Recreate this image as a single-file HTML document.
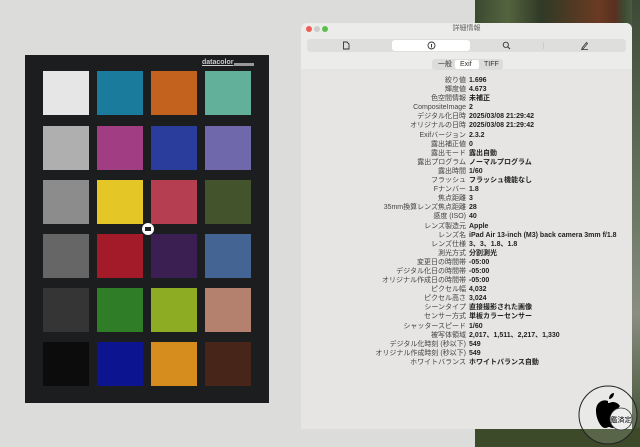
<!DOCTYPE html>
<html><head><meta charset="utf-8"><style>
*{margin:0;padding:0;box-sizing:border-box}
body{width:640px;height:447px;overflow:hidden;position:relative;background:#dcdcda;font-family:"Liberation Sans","Noto Sans CJK JP",sans-serif}
.forest{position:absolute;left:475px;top:0;width:165px;height:447px;background:linear-gradient(90deg,#3a4a30 0%,#55643f 20%,#2f3a26 40%,#6b3a22 75%,#5a3020 85%,#3d4a33 90%,#566b4a 100%)}
.forest2{position:absolute;left:632px;top:0;width:8px;height:447px;background:linear-gradient(#3c4a36,#6e7a68 50%,#8a8e82 70%,#3a4a2c)}
.forest3{position:absolute;left:475px;top:428px;width:165px;height:19px;background:#3c4a2a}
.chart{position:absolute;left:25px;top:55px;width:244px;height:348px;background:#1c1d1f}
.sw{position:absolute;width:46px;height:44px}
.win{position:absolute;left:301px;top:23px;width:331px;height:406px;background:#e6e5e4;border-radius:6px 6px 0 0;overflow:hidden}
.head{position:absolute;left:0;top:0;width:331px;height:46px;background:#ececeb}
.title{position:absolute;top:1px;width:331px;text-align:center;font-size:7px;line-height:9px;color:#666}
.dot{position:absolute;top:3px;width:6px;height:6px;border-radius:50%}
.tb{position:absolute;left:6px;top:16px;width:319px;height:13px;background:#dededd;border-radius:3px}
.tsel{position:absolute;left:85px;top:1px;width:78px;height:11px;background:#fff;border-radius:3px}
.seg{position:absolute;left:131px;top:36px;width:71px;height:11px;background:#dcdcdb;border-radius:3px;font-size:7px;line-height:11px;color:#333}
.seg span{position:absolute;top:0}
.rows{position:absolute;left:0;top:53px;width:331px;font-size:7px;line-height:9.1px}
.r{height:9.1px;line-height:9.1px;white-space:nowrap;overflow:visible}
.l{display:inline-block;width:165px;text-align:right;color:#444}
.v{display:inline-block;margin-left:3px;font-weight:bold;color:#222}
</style></head><body>
<div class="forest"></div><div class="forest2"></div><div class="forest3"></div>
<div class="chart">
<div style="position:absolute;left:177px;top:4px;font-size:7px;color:#ccc;font-weight:bold;text-decoration:underline">datacolor</div>
<div style="position:absolute;left:209px;top:8px;width:20px;height:3px;background:#999"></div>
<div class="sw" style="left:18px;top:16px;background:#e6e6e6"></div>
<div class="sw" style="left:72px;top:16px;background:#1a7b9d"></div>
<div class="sw" style="left:126px;top:16px;background:#c3621f"></div>
<div class="sw" style="left:180px;top:16px;background:#62b09a"></div>
<div class="sw" style="left:18px;top:71px;background:#afafaf"></div>
<div class="sw" style="left:72px;top:71px;background:#a03d83"></div>
<div class="sw" style="left:126px;top:71px;background:#2a3c9c"></div>
<div class="sw" style="left:180px;top:71px;background:#6f68ab"></div>
<div class="sw" style="left:18px;top:125px;background:#8c8c8c"></div>
<div class="sw" style="left:72px;top:125px;background:#e4c626"></div>
<div class="sw" style="left:126px;top:125px;background:#b53f50"></div>
<div class="sw" style="left:180px;top:125px;background:#43532c"></div>
<div class="sw" style="left:18px;top:179px;background:#666"></div>
<div class="sw" style="left:72px;top:179px;background:#a31a28"></div>
<div class="sw" style="left:126px;top:179px;background:#3b1f53"></div>
<div class="sw" style="left:180px;top:179px;background:#446494"></div>
<div class="sw" style="left:18px;top:233px;background:#353535"></div>
<div class="sw" style="left:72px;top:233px;background:#2f7d27"></div>
<div class="sw" style="left:126px;top:233px;background:#8dac24"></div>
<div class="sw" style="left:180px;top:233px;background:#b5816f"></div>
<div class="sw" style="left:18px;top:287px;background:#0c0c0c"></div>
<div class="sw" style="left:72px;top:287px;background:#0c1490"></div>
<div class="sw" style="left:126px;top:287px;background:#d68d1e"></div>
<div class="sw" style="left:180px;top:287px;background:#472518"></div>
<div style="position:absolute;left:117px;top:168px;width:12px;height:12px;border-radius:50%;background:#fff"><div style="position:absolute;left:3px;top:4px;width:6px;height:4px;background:#222"></div></div>
</div>
<div class="win">
<div class="head">
<div class="dot" style="left:5px;background:#ee5d55"></div>
<div class="dot" style="left:13px;background:#ccc"></div>
<div class="dot" style="left:21px;background:#5bc04a"></div>
<div class="title">詳細情報</div>
<div class="tb"><div class="tsel"></div>
<svg style="position:absolute;left:35px;top:2px" width="8" height="9"><path d="M1.5 1h3.5l2 2v5h-5.5z" fill="none" stroke="#333" stroke-width="0.9"/></svg>
<svg style="position:absolute;left:120px;top:2px" width="9" height="9"><circle cx="4.5" cy="4.5" r="3.5" fill="none" stroke="#333" stroke-width="0.9"/><path d="M4.5 3v3.5" stroke="#333"/></svg>
<svg style="position:absolute;left:195px;top:2px" width="9" height="9"><circle cx="3.8" cy="3.8" r="2.6" fill="none" stroke="#333" stroke-width="0.9"/><path d="M5.7 5.7l2.3 2.3" stroke="#333"/></svg>
<div style="position:absolute;left:236px;top:3px;width:1px;height:7px;background:#ccc"></div>
<svg style="position:absolute;left:273px;top:2px" width="9" height="9"><path d="M2 7l4.5-5.5 1 1L3 8H2zM1 8.5h7" fill="none" stroke="#333" stroke-width="0.8"/></svg>
</div>
<div class="seg"><div style="position:absolute;left:23px;top:1px;width:24px;height:9px;background:#fff;border-radius:2px"></div><span style="left:6px">一般</span><span style="left:28px">Exif</span><span style="left:52px">TIFF</span></div>
</div>
<div class="rows">
<div class="r"><span class="l">絞り値</span><span class="v">1.696</span></div>
<div class="r"><span class="l">輝度値</span><span class="v">4.673</span></div>
<div class="r"><span class="l">色空間情報</span><span class="v">未補正</span></div>
<div class="r"><span class="l">CompositeImage</span><span class="v">2</span></div>
<div class="r"><span class="l">デジタル化日時</span><span class="v">2025/03/08 21:29:42</span></div>
<div class="r"><span class="l">オリジナルの日時</span><span class="v">2025/03/08 21:29:42</span></div>
<div class="r"><span class="l">Exifバージョン</span><span class="v">2.3.2</span></div>
<div class="r"><span class="l">露出補正値</span><span class="v">0</span></div>
<div class="r"><span class="l">露出モード</span><span class="v">露出自動</span></div>
<div class="r"><span class="l">露出プログラム</span><span class="v">ノーマルプログラム</span></div>
<div class="r"><span class="l">露出時間</span><span class="v">1/60</span></div>
<div class="r"><span class="l">フラッシュ</span><span class="v">フラッシュ機能なし</span></div>
<div class="r"><span class="l">Fナンバー</span><span class="v">1.8</span></div>
<div class="r"><span class="l">焦点距離</span><span class="v">3</span></div>
<div class="r"><span class="l">35mm換算レンズ焦点距離</span><span class="v">28</span></div>
<div class="r"><span class="l">感度 (ISO)</span><span class="v">40</span></div>
<div class="r"><span class="l">レンズ製造元</span><span class="v">Apple</span></div>
<div class="r"><span class="l">レンズ名</span><span class="v">iPad Air 13-inch (M3) back camera 3mm f/1.8</span></div>
<div class="r"><span class="l">レンズ仕様</span><span class="v">3、3、1.8、1.8</span></div>
<div class="r"><span class="l">測光方式</span><span class="v">分割測光</span></div>
<div class="r"><span class="l">変更日の時間帯</span><span class="v">-05:00</span></div>
<div class="r"><span class="l">デジタル化日の時間帯</span><span class="v">-05:00</span></div>
<div class="r"><span class="l">オリジナル作成日の時間帯</span><span class="v">-05:00</span></div>
<div class="r"><span class="l">ピクセル幅</span><span class="v">4,032</span></div>
<div class="r"><span class="l">ピクセル高さ</span><span class="v">3,024</span></div>
<div class="r"><span class="l">シーンタイプ</span><span class="v">直接撮影された画像</span></div>
<div class="r"><span class="l">センサー方式</span><span class="v">単板カラーセンサー</span></div>
<div class="r"><span class="l">シャッタースピード</span><span class="v">1/60</span></div>
<div class="r"><span class="l">被写体領域</span><span class="v">2,017、1,511、2,217、1,330</span></div>
<div class="r"><span class="l">デジタル化時刻 (秒以下)</span><span class="v">549</span></div>
<div class="r"><span class="l">オリジナル作成時刻 (秒以下)</span><span class="v">549</span></div>
<div class="r"><span class="l">ホワイトバランス</span><span class="v">ホワイトバランス自動</span></div>
</div>
</div>
<svg style="position:absolute;left:577px;top:384px" width="62" height="62">
<circle cx="31" cy="31" r="29" fill="rgba(255,255,255,0.15)" stroke="#222" stroke-width="1"/>
<path d="M31 17c-5-2-12 1-12 10 0 8 5 17 9 17 2 0 3-1 4-1s2 1 4 1c3 0 6-5 8-10-4-2-5-8-1-12-2-3-5-4-7-4-2 0-3 1-5 1z" fill="#000"/>
<path d="M32 15c0-3 2-6 5-6 0 3-2 6-5 6z" fill="#000"/>
<circle cx="44" cy="35" r="11" fill="#eee" stroke="#333" stroke-width="0.8"/>
<text x="44" y="38" font-size="7" text-anchor="middle" font-family="Noto Sans CJK JP,sans-serif" fill="#111">鑑済定</text>
</svg>
</body></html>
